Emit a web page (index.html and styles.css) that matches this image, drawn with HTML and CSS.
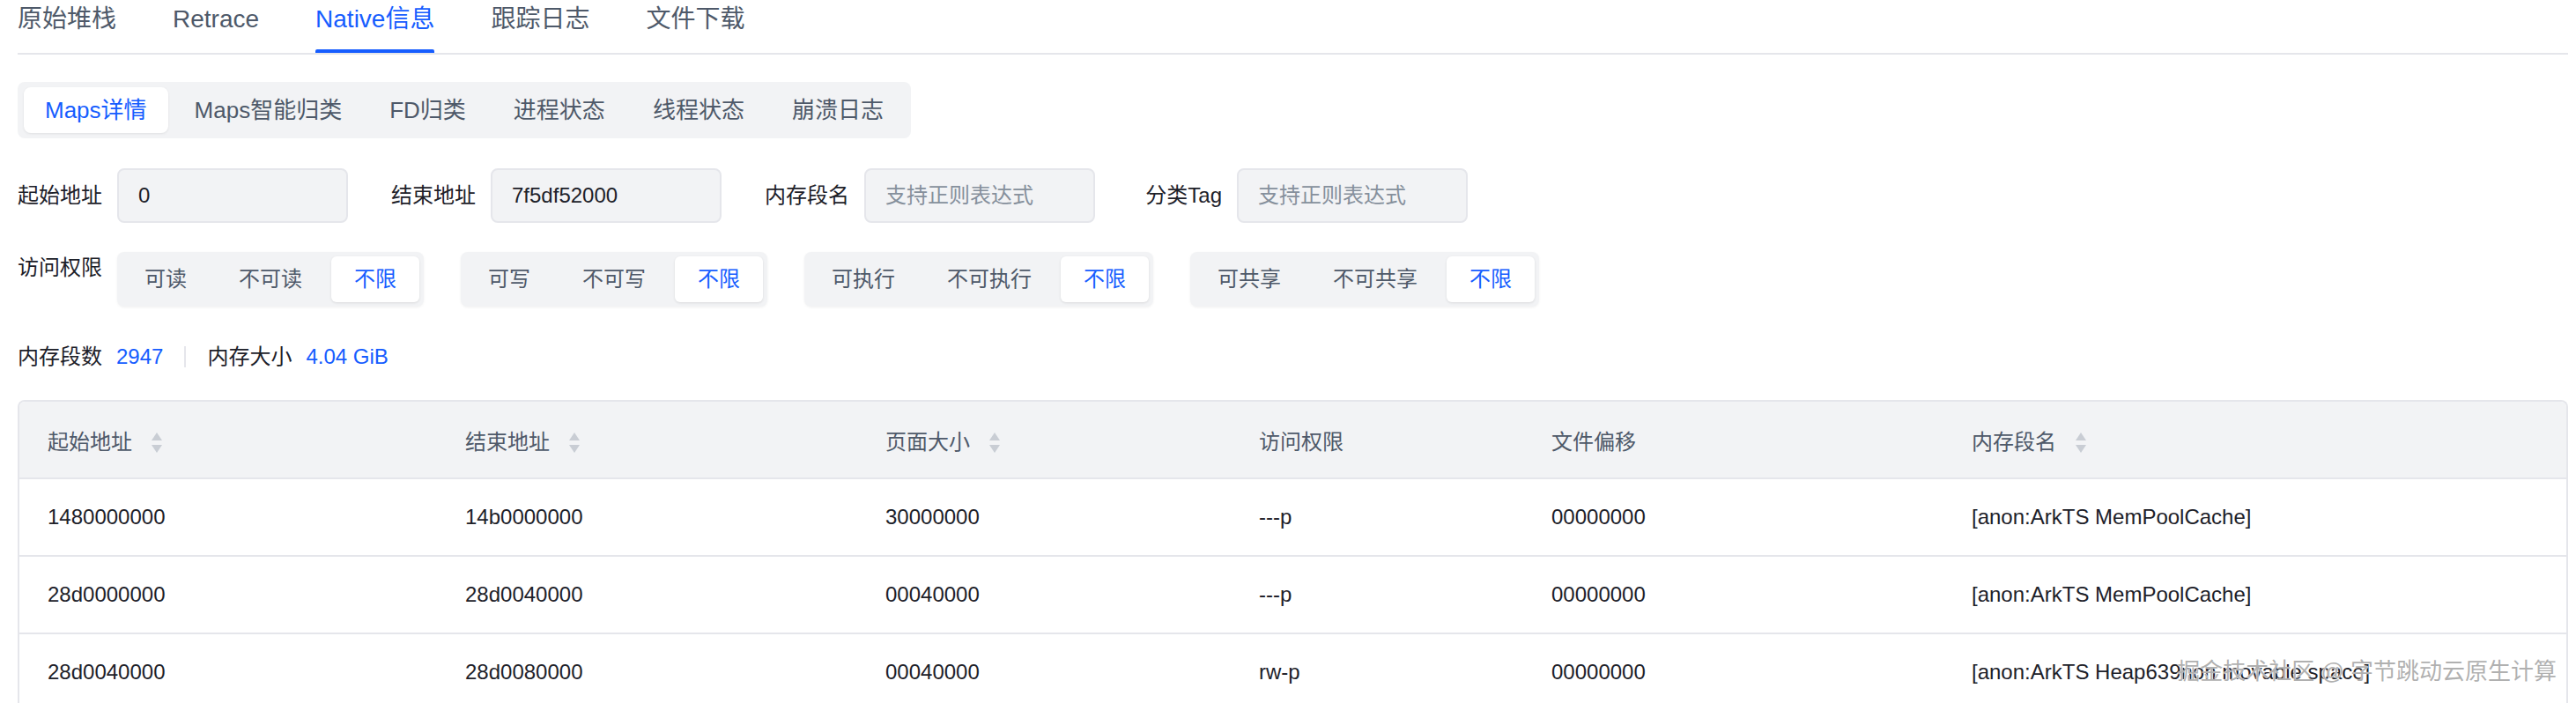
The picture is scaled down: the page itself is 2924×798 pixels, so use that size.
FILE: index.html
```html
<!DOCTYPE html>
<html>
	<head>
		<meta charset="UTF-8">
		<title>Native信息</title>
		<link rel="stylesheet" href="styles.css">
	</head>
	<body>
		<div class="page">
			<div class="tabs">
				<div class="tab">原始堆栈</div>
				<div class="tab">Retrace</div>
				<div class="tab active">Native信息</div>
				<div class="tab">跟踪日志</div>
				<div class="tab">文件下载</div>
			</div>

			<div class="seg">
				<div class="seg-item on">Maps详情</div>
				<div class="seg-item">Maps智能归类</div>
				<div class="seg-item">FD归类</div>
				<div class="seg-item">进程状态</div>
				<div class="seg-item">线程状态</div>
				<div class="seg-item">崩溃日志</div>
			</div>

			<div class="filters">
				<div class="field">
					<label>起始地址</label>
					<input type="text" value="0">
				</div>
				<div class="field">
					<label>结束地址</label>
					<input type="text" value="7f5df52000">
				</div>
				<div class="field">
					<label>内存段名</label>
					<input type="text" placeholder="支持正则表达式">
				</div>
				<div class="field">
					<label>分类Tag</label>
					<input type="text" placeholder="支持正则表达式">
				</div>
			</div>

			<div class="access">
				<label>访问权限</label>
				<div class="groups">
					<div class="group"><span>可读</span><span>不可读</span><span class="on">不限</span></div>
					<div class="group"><span>可写</span><span>不可写</span><span class="on">不限</span></div>
					<div class="group"><span>可执行</span><span>不可执行</span><span class="on">不限</span></div>
					<div class="group"><span>可共享</span><span>不可共享</span><span class="on">不限</span></div>
				</div>
			</div>

			<div class="stats">
				<span>内存段数</span><b>2947</b>
				<i class="divider"></i>
				<span>内存大小</span><b>4.04 GiB</b>
			</div>

			<div class="table-wrap">
				<table>
					<colgroup>
						<col style="width:474px">
						<col style="width:477px">
						<col style="width:424px">
						<col style="width:332px">
						<col style="width:477px">
						<col>
					</colgroup>
					<thead>
						<tr>
							<th>起始地址<svg class="sort" width="16" height="26" viewBox="0 0 16 26"><path d="M8 1 L14 10 L2 10 Z"/><path d="M2 15 L14 15 L8 24 Z"/></svg></th>
							<th>结束地址<svg class="sort" width="16" height="26" viewBox="0 0 16 26"><path d="M8 1 L14 10 L2 10 Z"/><path d="M2 15 L14 15 L8 24 Z"/></svg></th>
							<th>页面大小<svg class="sort" width="16" height="26" viewBox="0 0 16 26"><path d="M8 1 L14 10 L2 10 Z"/><path d="M2 15 L14 15 L8 24 Z"/></svg></th>
							<th>访问权限</th>
							<th>文件偏移</th>
							<th>内存段名<svg class="sort" width="16" height="26" viewBox="0 0 16 26"><path d="M8 1 L14 10 L2 10 Z"/><path d="M2 15 L14 15 L8 24 Z"/></svg></th>
						</tr>
					</thead>
					<tbody>
						<tr>
							<td>1480000000</td>
							<td>14b0000000</td>
							<td>30000000</td>
							<td>---p</td>
							<td>00000000</td>
							<td>[anon:ArkTS MemPoolCache]</td>
						</tr>
						<tr>
							<td>28d0000000</td>
							<td>28d0040000</td>
							<td>00040000</td>
							<td>---p</td>
							<td>00000000</td>
							<td>[anon:ArkTS MemPoolCache]</td>
						</tr>
						<tr>
							<td>28d0040000</td>
							<td>28d0080000</td>
							<td>00040000</td>
							<td>rw-p</td>
							<td>00000000</td>
							<td>[anon:ArkTS Heap639non movable space]</td>
						</tr>
					</tbody>
				</table>
			</div>

			<div class="watermark">掘金技术社区 @ 字节跳动云原生计算</div>
		</div>
	</body>
</html>
```

FILE: styles.css
```css
* {
	margin: 0;
	padding: 0;
	box-sizing: border-box;
}
body {
	font-family: "Liberation Sans", "Noto Sans CJK SC", sans-serif;
	color: #1d2129;
	background: #fff;
}
.page {
	position: relative;
	padding: 0 9px 0 20px;
}

/* top tabs */
.tabs {
	display: flex;
	gap: 64px;
	height: 62px;
	border-bottom: 2px solid #e5e6eb;
}
.tab {
	position: relative;
	height: 60px;
	font-size: 28px;
	line-height: 44px;
	color: #4e5969;
}
.tab.active {
	color: #165dff;
}
.tab.active:after {
	content: '';
	position: absolute;
	left: 0;
	right: 0;
	bottom: 0;
	height: 4px;
	border-radius: 2px 2px 0 0;
	background: #165dff;
}

/* sub tabs */
.seg {
	display: inline-flex;
	gap: 6px;
	margin-top: 31px;
	padding: 6px 7px;
	background: #f2f3f5;
	border-radius: 8px;
}
.seg-item {
	height: 52px;
	line-height: 52px;
	padding: 0 24px;
	font-size: 26px;
	color: #4e5969;
	border-radius: 8px;
}
.seg-item.on {
	background: #fff;
	color: #165dff;
	box-shadow: 0 1px 3px rgba(0, 0, 0, 0.08);
}

/* filters */
.filters {
	display: grid;
	grid-template-columns: repeat(4, 374px);
	column-gap: 50px;
	margin-top: 34px;
}
.field {
	display: flex;
	align-items: center;
}
.field label,
.access label {
	width: 96px;
	margin-right: 17px;
	text-align: right;
	font-size: 24px;
	line-height: 36px;
	white-space: nowrap;
	color: #1d2129;
}
.field input {
	width: 262px;
	height: 62px;
	padding: 0 22px;
	background: #f2f3f5;
	border: 2px solid #e5e6eb;
	border-radius: 8px;
	font-family: inherit;
	font-size: 24px;
	color: #1d2129;
	outline: none;
}
.field input::placeholder {
	color: #86909c;
}

/* access */
.access {
	display: flex;
	align-items: flex-start;
	margin-top: 33px;
}
.groups {
	display: flex;
	gap: 42px;
}
.group {
	display: flex;
	gap: 7px;
	padding: 5px;
	background: #f2f3f5;
	border-radius: 8px;
	box-shadow: 0 1px 3px rgba(0, 0, 0, 0.06);
}
.group span {
	height: 52px;
	line-height: 52px;
	padding: 0 26px;
	font-size: 24px;
	color: #4e5969;
	border-radius: 6px;
}
.group span.on {
	background: #fff;
	color: #165dff;
	box-shadow: 0 1px 3px rgba(0, 0, 0, 0.1);
}

/* stats */
.stats {
	display: flex;
	align-items: center;
	margin-top: 39px;
	font-size: 24px;
	line-height: 36px;
}
.stats b {
	font-weight: normal;
	color: #165dff;
	margin-left: 16px;
}
.stats .divider {
	width: 2px;
	height: 24px;
	margin: 0 24px;
	background: #e5e6eb;
}

/* table */
.table-wrap {
	margin-top: 31px;
	border: 2px solid #e5e6eb;
	border-bottom: none;
	border-radius: 8px 8px 0 0;
	overflow: hidden;
}
table {
	width: 100%;
	table-layout: fixed;
	border-collapse: separate;
	border-spacing: 0;
}
th,
td {
	height: 88px;
	padding: 0 32px;
	text-align: left;
	font-size: 24px;
	font-weight: normal;
	white-space: nowrap;
	border-bottom: 2px solid #e5e6eb;
}
th {
	background: #f2f3f5;
	color: #4e5969;
}
td {
	color: #1d2129;
}
.sort {
	margin-left: 20px;
	vertical-align: middle;
	fill: #c9cdd4;
}

.watermark {
	position: absolute;
	right: 22px;
	top: 744px;
	font-size: 26px;
	line-height: 36px;
	color: rgba(150, 150, 150, 0.75);
	text-shadow: 0 0 1px #fff, 0 0 1px #fff;
	white-space: nowrap;
}
```
